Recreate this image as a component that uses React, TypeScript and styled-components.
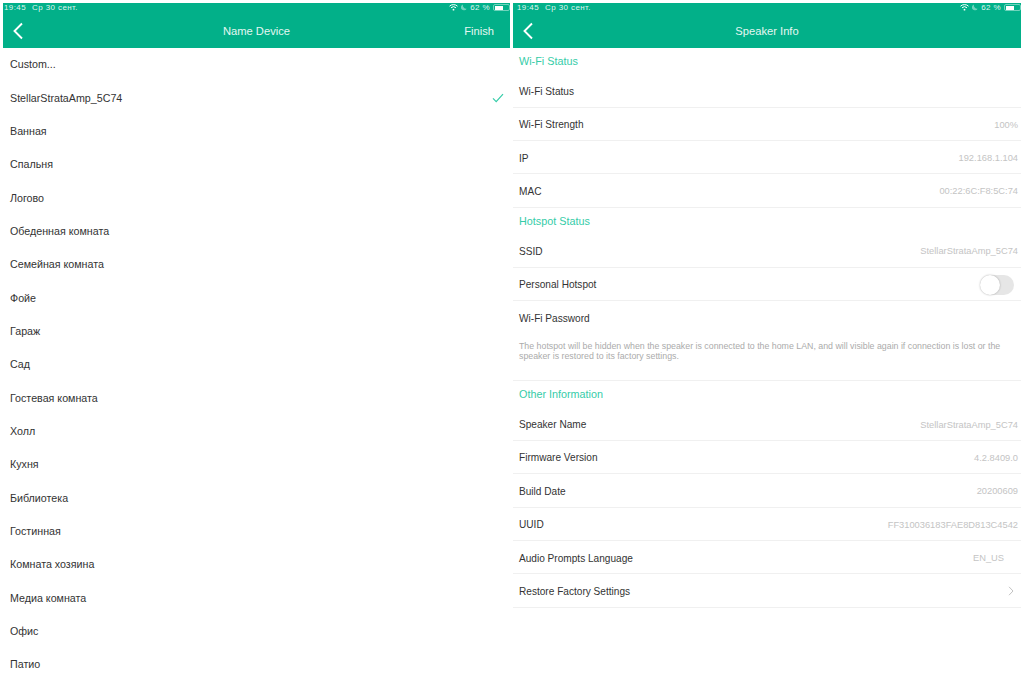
import React from "react";
import styled, { createGlobalStyle } from "styled-components";

const Global = createGlobalStyle`
  html, body { margin: 0; padding: 0; background: #fff; }
  body { font-family: "Liberation Sans", Arial, sans-serif; overflow: hidden; }
`;

const Page = styled.div`
  width: 1024px;
  height: 683px;
  overflow: hidden;
  display: grid;
  grid-template-columns: 507px 508px;
  column-gap: 3px;
  padding: 3px 3px 0 3px;
  box-sizing: border-box;
  background: #fff;
`;
const Panel = styled.section`
  min-width: 0;
  display: flex;
  flex-direction: column;
`;
const Header = styled.header`
  height: 44.5px;
  flex: none;
  background: #02b089;
  color: #fff;
  display: flex;
  flex-direction: column;
`;
const StatusBar = styled.div<{ $inset: number }>`
  height: 9px;
  display: flex;
  align-items: center;
  justify-content: space-between;
  padding: 0 0 0 ${(p) => p.$inset}px;
  font-size: 8px;
  letter-spacing: 0.4px;
  color: #dff5ef;
  line-height: 9px;
`;
const StatusGroup = styled.div<{ $gap: number }>`
  display: flex;
  align-items: center;
  gap: ${(p) => p.$gap}px;
`;
const Battery = styled.span`
  width: 17px;
  height: 7px;
  border-radius: 2px;
  box-sizing: border-box;
  border: 0.5px solid #6fd3bc;
  padding: 0.5px;
  display: block;
  &::before {
    content: "";
    display: block;
    height: 100%;
    width: 62%;
    background: #fff;
  }
`;
const NavBar = styled.div`
  flex: 1;
  display: grid;
  grid-template-columns: 60px 1fr 60px;
  align-items: center;
  padding-top: 3px;
`;
const BackButton = styled.span`
  display: flex;
  align-items: center;
  padding-left: 9px;
`;
const NavTitle = styled.h1`
  margin: 0;
  font-size: 11.2px;
  font-weight: 400;
  text-align: center;
  color: #e4f7f2;
`;
const NavAction = styled.span`
  font-size: 11.2px;
  text-align: right;
  padding-right: 16px;
  color: #e4f7f2;
`;
const NameList = styled.ul`
  list-style: none;
  margin: 0;
  padding: 0;
`;
const NameRow = styled.li`
  height: 33.35px;
  display: flex;
  align-items: center;
  justify-content: space-between;
  padding: 0 6px 0 7px;
  font-size: 10.7px;
  color: #333;
`;
const Section = styled.h2`
  margin: 0;
  height: 26.7px;
  display: flex;
  align-items: center;
  padding-left: 6px;
  font-size: 10.8px;
  font-weight: 400;
  color: #35cca8;
`;
const InfoRow = styled.div<{ $plain?: boolean }>`
  height: 33.35px;
  box-sizing: border-box;
  display: flex;
  align-items: center;
  justify-content: space-between;
  padding: 2px 3px 0 6px;
  font-size: 10.1px;
  color: #333;
  border-bottom: ${(p) => (p.$plain ? "none" : "1px solid #f0f0f0")};
`;
const Value = styled.span<{ $indent?: boolean }>`
  font-size: 9.3px;
  color: #c4c4c4;
  margin-right: ${(p) => (p.$indent ? 14 : 0)}px;
`;
const DisclosureSlot = styled.span`
  display: flex;
  margin-right: 4px;
`;
const Toggle = styled.span`
  width: 34px;
  height: 20px;
  box-sizing: border-box;
  border-radius: 10px;
  background: #e6e6e6;
  margin-right: 4px;
  display: block;
  &::before {
    content: "";
    display: block;
    width: 20px;
    height: 20px;
    border-radius: 50%;
    background: #fff;
    box-shadow: 0 0 2px rgba(0, 0, 0, 0.3);
  }
`;
const Note = styled.p`
  margin: 0;
  height: 46.5px;
  box-sizing: border-box;
  border-bottom: 1px solid #f0f0f0;
  padding: 7px 12px 0 6px;
  font-size: 8.8px;
  line-height: 10px;
  color: #ababab;
`;

const Chevron = () => (
  <svg width="12" height="18" viewBox="0 0 12 18" fill="none" stroke="#fff" strokeWidth="1.9">
    <path d="M10 1.5 2.5 9l7.5 7.5" />
  </svg>
);
const Wifi = () => (
  <svg width="9" height="7" viewBox="0 0 9 7" fill="none" stroke="#fff" strokeWidth="1">
    <path d="M.5 2.2a5.8 5.8 0 0 1 8 0M2 3.8a3.6 3.6 0 0 1 5 0" />
    <circle cx="4.5" cy="5.7" r=".9" fill="#fff" stroke="none" />
  </svg>
);
const Moon = () => (
  <svg width="6" height="7" viewBox="0 0 6 7">
    <path d="M2 .5a3 3 0 1 0 3.6 4.2A3.4 3.4 0 0 1 2 .5Z" fill="#6fd3bc" />
  </svg>
);
const Check = () => (
  <svg width="12" height="10" viewBox="0 0 12 10" fill="none" stroke="#35cca8" strokeWidth="1.2">
    <path d="M1 5.4 4.2 8.6 11 1.2" />
  </svg>
);
const Disclosure = () => (
  <svg width="6" height="10" viewBox="0 0 6 10" fill="none" stroke="#c2c2c2" strokeWidth="1">
    <path d="M1 .8 5 5 1 9.2" />
  </svg>
);

const TopBar = ({ title, action, inset }: { title: string; action?: string; inset: number }) => (
  <Header>
    <StatusBar $inset={inset}>
      <StatusGroup $gap={6}>
        <span>19:45</span>
        <span>Ср 30 сент.</span>
      </StatusGroup>
      <StatusGroup $gap={3}>
        <Wifi />
        <Moon />
        <span>62 %</span>
        <Battery />
      </StatusGroup>
    </StatusBar>
    <NavBar>
      <BackButton>
        <Chevron />
      </BackButton>
      <NavTitle>{title}</NavTitle>
      <NavAction>{action}</NavAction>
    </NavBar>
  </Header>
);

const names = [
  "Custom...", "StellarStrataAmp_5C74", "Ванная", "Спальня", "Логово", "Обеденная комната",
  "Семейная комната", "Фойе", "Гараж", "Сад", "Гостевая комната", "Холл", "Кухня",
  "Библиотека", "Гостинная", "Комната хозяина", "Медиа комната", "Офис", "Патио",
];

export default function App() {
  return (
    <Page>
      <Global />
      <Panel>
        <TopBar title="Name Device" action="Finish" inset={1} />
        <NameList>
          {names.map((n) => (
            <NameRow key={n}>
              <span>{n}</span>
              {n.startsWith("Stellar") && <Check />}
            </NameRow>
          ))}
        </NameList>
      </Panel>
      <Panel>
        <TopBar title="Speaker Info" inset={4} />
        <Section>Wi-Fi Status</Section>
        <InfoRow>Wi-Fi Status</InfoRow>
        <InfoRow>Wi-Fi Strength<Value>100%</Value></InfoRow>
        <InfoRow>IP<Value>192.168.1.104</Value></InfoRow>
        <InfoRow>MAC<Value>00:22:6C:F8:5C:74</Value></InfoRow>
        <Section>Hotspot Status</Section>
        <InfoRow>SSID<Value>StellarStrataAmp_5C74</Value></InfoRow>
        <InfoRow>Personal Hotspot<Toggle /></InfoRow>
        <InfoRow $plain>Wi-Fi Password</InfoRow>
        <Note>
          The hotspot will be hidden when the speaker is connected to the home LAN, and will visible again if connection is lost or the speaker is restored to its factory settings.
        </Note>
        <Section>Other Information</Section>
        <InfoRow>Speaker Name<Value>StellarStrataAmp_5C74</Value></InfoRow>
        <InfoRow>Firmware Version<Value>4.2.8409.0</Value></InfoRow>
        <InfoRow>Build Date<Value>20200609</Value></InfoRow>
        <InfoRow>UUID<Value>FF310036183FAE8D813C4542</Value></InfoRow>
        <InfoRow>Audio Prompts Language<Value $indent>EN_US</Value></InfoRow>
        <InfoRow>Restore Factory Settings<DisclosureSlot><Disclosure /></DisclosureSlot></InfoRow>
      </Panel>
    </Page>
  );
}
